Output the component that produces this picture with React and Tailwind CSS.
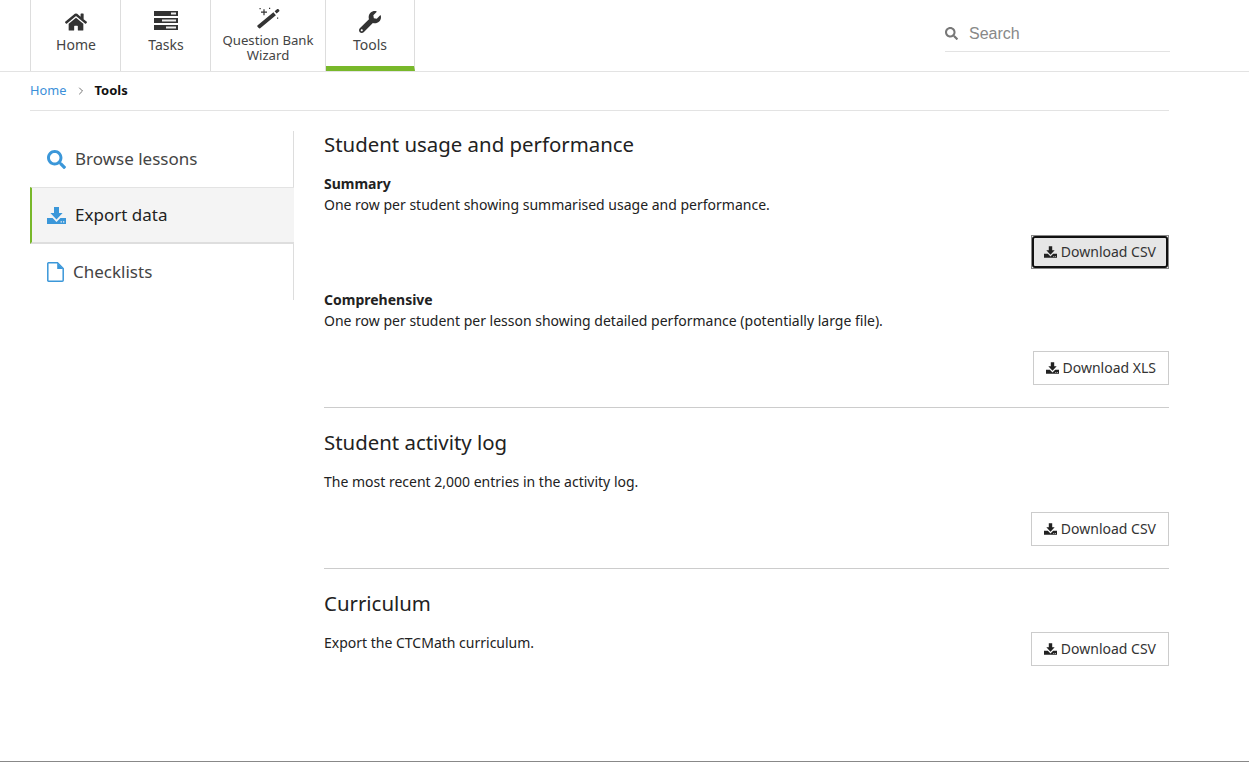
import React from "react";
import { FaHome, FaWrench, FaSearch } from "react-icons/fa";
import { ChevronRight } from "lucide-react";

const ServerIcon = ({ className }) => (
  <svg viewBox="0 0 24 19" className={className}>
    <path fill="#333" d="M0 0h24v5H0zM0 7h24v5H0zM0 14h24v5H0z" />
    <path fill="#eee" d="M17 1.5h5v2h-5zM8 8.5h14v2H8zM12 15.5h10v2H12z" />
  </svg>
);

const WandIcon = ({ className }) => (
  <svg viewBox="0 0 24 22" className={className}>
    <path fill="#333" d="M18.6 4.2 21 2.2c.5-.4 1.1-.3 1.5.1l.7.8c.4.5.3 1.1-.2 1.5l-2.4 2zM17.4 5.2l2.5 3L4.2 21.3c-.5.4-1.1.3-1.5-.2l-1.2-1.4c-.4-.5-.3-1.1.2-1.5z" />
    <path fill="#333" d="M7.4 2.2h1.2v2.4H11v1.2H8.6v2.4H7.4V5.8H5V4.6h2.4zM3.5 1h1.2v1.2H3.5zM13 .8h1.2V2H13zM21 10.5h1.2v1.2H21z" />
  </svg>
);

const DownloadIcon = ({ className }) => (
  <svg viewBox="0 0 19 17" className={className}>
    <path fill="currentColor" d="M7 0h5v6h3.6L9.5 12.4 3.4 6H7z" />
    <path fill="currentColor" fillRule="evenodd" d="M0 11h5.6l3.9 3.9 3.9-3.9H19v6H0zM13.6 14.2v1.3h1.3v-1.3zM16 14.2v1.3h1.3v-1.3z" />
  </svg>
);

const FileIcon = ({ className }) => (
  <svg viewBox="0 0 17 20" className={className}>
    <path
      fill="none"
      stroke="currentColor"
      strokeWidth="1.5"
      d="M1.5.8h9l5.7 5.7v11.7a1 1 0 0 1-1 1H1.5a.7.7 0 0 1-.7-.7V1.5a.7.7 0 0 1 .7-.7z"
    />
    <path fill="currentColor" d="M10.2 1v6h6z" />
  </svg>
);

const navItems = [
  { label: "Home", icon: FaHome, width: "w-[90px]", iconClass: "w-[22px] h-[22px] text-[#333]", textClass: "mt-[2px] translate-x-[0.5px]" },
  { label: "Tasks", icon: ServerIcon, width: "w-[90px]", iconClass: "w-[24px] h-[19px]", textClass: "mt-[5px] translate-x-[0.5px]" },
  { label: "Question Bank Wizard", icon: WandIcon, width: "w-[115px]", small: true, iconClass: "w-[24px] h-[22px]" },
  { label: "Tools", icon: FaWrench, width: "w-[89px]", active: true, iconClass: "w-[22px] h-[22px] text-[#333]", textClass: "mt-[2px]" },
];

const DownloadButton = ({ label, focused }) =>
  focused ? (
    <button className="h-[34px] flex border border-[#888] text-sm text-[#333]">
      <span className="h-full px-[10px] flex items-center gap-[4px] bg-[#e6e6e6] border-2 border-[#111] rounded-[3px]">
        <DownloadIcon className="w-[13px] h-[12px] text-[#222]" />
        {label}
      </span>
    </button>
  ) : (
    <button className="h-[34px] px-3 flex items-center gap-[4px] text-sm text-[#333] bg-white border border-[#ccc]">
      <DownloadIcon className="w-[13px] h-[12px] text-[#222]" />
      {label}
    </button>
  );

const SideItem = ({ icon: Icon, label, active, iconClass }) => (
  <div
    className={
      active
        ? "h-[57px] flex items-center gap-[9px] pl-[15px] bg-[#f4f4f4] border-l-2 border-l-[#78b82a] border-t border-t-[#e3e3e3] border-b-2 border-b-[#dedede] text-[#222]"
        : "h-[56px] flex items-center gap-[9px] pl-[17px] border-r border-r-[#ddd] text-[#444]"
    }
  >
    <Icon className={`${iconClass} text-[#3b97d9]`} />
    <span className="text-[17px]">{label}</span>
  </div>
);

export default function App() {
  return (
    <div className="min-h-[762px] bg-white flex flex-col border-b border-b-[#888] text-[#222] font-['Noto_Sans','Open_Sans',sans-serif]">
      {/* Top nav */}
      <header className="h-[72px] border-b border-[#e3e3e3]">
        <div className="w-[1140px] ml-[30px] h-full flex justify-between">
          <nav className="flex h-full border-l border-[#ddd]">
            {navItems.map((item) => (
              <div
                key={item.label}
                className={`${item.width} h-full flex flex-col items-center border-r border-[#ddd] ${
                  item.active ? "border-b-[5px] border-b-[#78b82a]" : ""
                } ${item.small ? "pt-[7px]" : "pt-[11px]"}`}
              >
                <item.icon className={item.iconClass} />
                <span
                  className={
                    item.small
                      ? "mt-[4px] text-[13.2px] leading-[15px] text-center text-[#444] w-[100px]"
                      : `${item.textClass} text-sm leading-[20px] text-[#444]`
                  }
                >
                  {item.label}
                </span>
              </div>
            ))}
          </nav>
          <div className="w-[225px] h-[37px] mt-[15px] flex items-center gap-[11px] border-b border-[#e3e3e3]">
            <FaSearch className="w-[13px] h-[13px] text-[#777]" />
            <span className="font-['Liberation_Sans',sans-serif] text-base leading-[26px] pt-[1px] text-[#888]">Search</span>
          </div>
        </div>
      </header>

      <main className="w-[1139px] ml-[30px]">
        {/* Breadcrumb */}
        <div className="h-[39px] flex items-center border-b border-[#e3e3e3] text-[13px]">
          <span className="text-[12.8px] text-[#3b8fd9]">Home</span>
          <ChevronRight size={12} strokeWidth={1.5} className="ml-[9px] mr-[7px] text-[#444]" />
          <span className="font-bold text-[#111]">Tools</span>
        </div>

        <div className="flex pt-5">
          {/* Sidebar */}
          <aside className="w-[264px] shrink-0 self-start">
            <SideItem icon={FaSearch} label="Browse lessons" iconClass="w-[19px] h-[19px]" />
            <SideItem icon={DownloadIcon} label="Export data" active iconClass="w-[19px] h-[17px]" />
            <SideItem icon={FileIcon} label="Checklists" iconClass="w-[17px] h-[20px]" />
          </aside>

          {/* Content */}
          <section className="flex-1 pl-[30px] text-sm">
            <h2 className="text-[20.4px] leading-[26px]">Student usage and performance</h2>
            <h3 className="mt-[17px] font-bold">Summary</h3>
            <p className="leading-[21px]">One row per student showing summarised usage and performance.</p>
            <div className="flex justify-end mt-[20px]">
              <DownloadButton label="Download CSV" focused />
            </div>
            <h3 className="mt-[21px] font-bold">Comprehensive</h3>
            <p className="leading-[21px]">One row per student per lesson showing detailed performance (potentially large file).</p>
            <div className="flex justify-end mt-[20px] pb-[22px] border-b border-[#ccc]">
              <DownloadButton label="Download XLS" />
            </div>

            <h2 className="mt-[21px] text-[20.4px] leading-[26px]">Student activity log</h2>
            <p className="mt-[16px] leading-[21px]">The most recent 2,000 entries in the activity log.</p>
            <div className="flex justify-end mt-[20px] pb-[22px] border-b border-[#ccc]">
              <DownloadButton label="Download CSV" />
            </div>

            <h2 className="mt-[21px] text-[20.4px] leading-[26px]">Curriculum</h2>
            <div className="flex justify-between items-start mt-[16px]">
              <p className="leading-[21px]">Export the CTCMath curriculum.</p>
              <DownloadButton label="Download CSV" />
            </div>
          </section>
        </div>
      </main>
    </div>
  );
}
